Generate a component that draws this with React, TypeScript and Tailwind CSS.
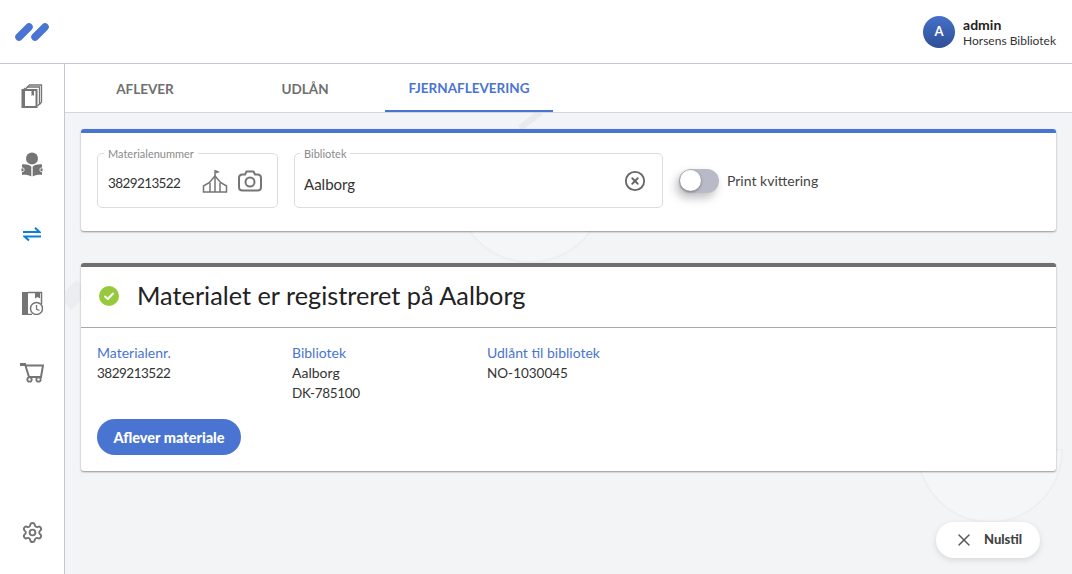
import { CircleX, Settings, X } from "lucide-react";

const BooksIcon = () => (
  <svg width="22" height="24" viewBox="0 0 22 24" fill="none">
    <path d="M6 3.500 8.500 1H20.500V18L18.500 20.500" stroke="#757575" strokeWidth="1.300" />
    <path d="M4 5.500 6.500 3H18.500V20L16.500 22" stroke="#757575" strokeWidth="1.300" />
    <path d="M1.500 6H15.500V23H1.500Z" fill="#fff" stroke="#757575" strokeWidth="2" />
    <path d="M1 6 4 3.500V23H1Z" fill="#757575" />
    <path d="M10.500 6H13V12L11.750 11 10.500 12Z" fill="#757575" />
  </svg>
);

const ReaderIcon = () => (
  <svg width="22" height="25" viewBox="0 0 22 25" fill="#757575">
    <circle cx="11" cy="6.500" r="6" />
    <path d="M10.300 14.500C8 12.500 4 12 1 12.500V23C4 22.500 8 23 10.300 24.500Z" />
    <path d="M11.700 14.500C14 12.500 18 12 21 12.500V23C18 22.500 14 23 11.700 24.500Z" />
    <rect x="0" y="16" width="3" height="3.500" rx="1" stroke="#fff" strokeWidth="0.800" />
    <rect x="19" y="16" width="3" height="3.500" rx="1" stroke="#fff" strokeWidth="0.800" />
  </svg>
);

const SwapIcon = () => (
  <svg width="18" height="14" viewBox="0 0 18 14" fill="none" stroke="#0f7fd6" strokeWidth="2">
    <path d="M0 5H16.500L12 0.800" />
    <path d="M18 9.500H1.500L6 13.500" />
  </svg>
);

const BookClockIcon = () => (
  <svg width="21" height="24" viewBox="0 0 21 24" fill="none">
    <path d="M0 1H6V24H0Z" fill="#757575" />
    <path d="M6 1.500H19.500V13M6 23.500H10" stroke="#757575" strokeWidth="1.500" />
    <path d="M13 1H18V7.500L15.500 6 13 7.500Z" fill="#757575" />
    <circle cx="14.500" cy="17.500" r="6" fill="#fff" stroke="#757575" strokeWidth="1.500" />
    <path d="M14.500 14V18L17.500 19.500" stroke="#757575" strokeWidth="1.300" />
  </svg>
);

const CartIcon = () => (
  <svg width="24" height="21" viewBox="0 0 24 21" fill="none" stroke="#757575">
    <path d="M0 1H6V4H0Z" fill="#757575" strokeWidth="0" />
    <path d="M5 2 9 15H21L23 3.500H5.500" strokeWidth="2" />
    <circle cx="9.500" cy="17.500" r="2.200" strokeWidth="1.800" />
    <circle cx="18.500" cy="17.500" r="2.200" strokeWidth="1.800" />
  </svg>
);

const LibraryIcon = () => (
  <svg width="26" height="24" viewBox="0 0 26 24" fill="none" stroke="#757575" strokeWidth="1.500">
    <path d="M1.500 23V17L7.500 13.500 13 7 18.500 13.500 24.500 17V23Z" />
    <path d="M8 14V23M18 14V23M13 8V23" />
    <path d="M13 7V1" />
    <path d="M13.500 1 18 3 13.500 4.500Z" fill="#757575" strokeWidth="0" />
  </svg>
);

const CameraIcon = () => (
  <svg width="24" height="22" viewBox="0 0 24 22" fill="none" stroke="#757575" strokeWidth="2">
    <path d="M4.500 4.500H7L8.500 1.500H15.500L17 4.500H19.500C21.500 4.500 23 6 23 8V17C23 19 21.500 20.500 19.500 20.500H4.500C2.500 20.500 1 19 1 17V8C1 6 2.500 4.500 4.500 4.500Z" strokeLinejoin="round" />
    <circle cx="12" cy="12" r="4.500" />
  </svg>
);

const Field = ({
  label,
  widthClass,
  labelClass,
  children,
}: {
  label: string;
  widthClass: string;
  labelClass: string;
  children: React.ReactNode;
}) => (
  <div className={`relative h-[55px] rounded-[5px] border border-[#dcdcdc] ${widthClass}`}>
    <span className={`absolute -top-[6px] bg-white px-1 text-[11px] leading-[12px] text-[#8a8a8a] ${labelClass}`}>
      {label}
    </span>
    {children}
  </div>
);

const InfoColumn = ({ title, lines }: { title: string; lines: { text: string; className: string }[] }) => (
  <div className="w-[195px] leading-5">
    <div className="text-[14px] text-[#4a74d1]">{title}</div>
    {lines.map((line) => (
      <div key={line.text} className={`text-[#333] ${line.className}`}>
        {line.text}
      </div>
    ))}
  </div>
);

const App = () => {
  return (
    <div
      className="flex h-[574px] w-[1072px] flex-col overflow-hidden bg-white text-[#333]"
      style={{ fontFamily: "Lato, 'Noto Sans', sans-serif" }}
    >
      <header className="flex h-[64px] shrink-0 items-center justify-between border-b border-[#c4c6d2] pl-[14px] pr-[16px]">
        <svg width="36" height="20" viewBox="0 0 36 20" fill="none" stroke="#4a74d1" strokeWidth="7.500" strokeLinecap="round">
          <path d="M5 15 15 5" />
          <path d="M21 15 31 5" />
        </svg>
        <div className="flex items-center gap-2">
          <div className="flex h-8 w-8 items-center justify-center rounded-full bg-gradient-to-b from-[#4471c9] to-[#2f4f96] text-[13px] font-bold text-white">
            A
          </div>
          <div className="pt-[2px] leading-[15px]">
            <div className="text-[14px] font-bold text-[#222]">admin</div>
            <div className="mt-[1px] text-[12px] text-[#333]">Horsens Bibliotek</div>
          </div>
        </div>
      </header>

      <div className="flex min-h-0 flex-1">
        <aside className="flex w-[65px] shrink-0 flex-col items-center border-r border-[#c4c6d2] pb-[30px] pt-[20px]">
          <div className="flex h-6 items-center">
            <BooksIcon />
          </div>
          <div className="mt-[44px] flex h-[25px] items-center">
            <ReaderIcon />
          </div>
          <div className="mt-[50px] flex h-[14px] items-center">
            <SwapIcon />
          </div>
          <div className="mt-[50px] flex h-6 items-center">
            <BookClockIcon />
          </div>
          <div className="mt-[47px] flex h-[21px] items-center">
            <CartIcon />
          </div>
          <Settings className="mt-auto h-[23px] w-[23px] text-[#757575]" strokeWidth={2} />
        </aside>

        <main className="relative min-w-0 flex-1 bg-[#f3f4f6]">
          <svg className="absolute inset-0 h-full w-full" viewBox="0 0 1007 510" fill="none" aria-hidden="true">
            <path d="M390 123A75 75 0 0 0 540 123Z" fill="#f5f6f7" stroke="#eeeff1" strokeWidth="2" />
            <path d="M853 386A72 72 0 0 0 997 386Z" fill="#f5f6f7" stroke="#eeeff1" strokeWidth="2" />
            <path d="M455 64 476 48" stroke="#e9eaed" strokeWidth="6" />
            <path d="M0 240 18 222" stroke="#ecedf0" strokeWidth="18" />
          </svg>

          <nav className="relative flex h-[49px] border-b border-[#d5d6db] bg-white pt-[2px] text-[13.500px] font-bold">
            <div className="flex w-[160px] items-center justify-center text-[#6f6f6f]">AFLEVER</div>
            <div className="flex w-[160px] items-center justify-center text-[#6f6f6f]">UDLÅN</div>
            <div className="flex w-[168px] items-center justify-center border-b-2 border-[#4a74d1] text-[#4a74d1]">
              FJERNAFLEVERING
            </div>
          </nav>

          <div className="relative flex flex-col gap-8 p-4 pb-0">
            <section className="flex h-[102px] items-center rounded-[3px] border-t-4 border-[#4a74d1] bg-white pb-[3px] pl-4 shadow-[0_1px_2px_rgba(0,0,0,0.4)]">
              <Field label="Materialenummer" widthClass="w-[181px]" labelClass="left-[6px]">
                <div className="flex h-full items-center pl-[10px] pr-[15px]">
                  <span className="mt-[6px] text-[13.500px] tracking-[-0.6px]">3829213522</span>
                  <span className="ml-auto flex items-center gap-[10px]">
                    <LibraryIcon />
                    <CameraIcon />
                  </span>
                </div>
              </Field>
              <div className="ml-4">
                <Field label="Bibliotek" widthClass="w-[369px]" labelClass="left-[5px]">
                  <div className="flex h-full items-center pl-[9px] pr-[16px]">
                    <span className="mt-[8px] text-[15px]">Aalborg</span>
                    <CircleX className="ml-auto h-[22px] w-[22px] text-[#666]" strokeWidth={2} />
                  </div>
                </Field>
              </div>
              <div className="ml-[16px] flex items-center gap-2">
                <div className="flex h-6 w-10 items-center rounded-full bg-[#b8bbc7] pl-[1px] shadow-[-3px_5px_10px_rgba(0,0,0,0.25)]">
                  <div className="h-[21px] w-[21px] rounded-full bg-white shadow-[0_1px_3px_rgba(0,0,0,0.4)]" />
                </div>
                <span className="text-[14px] text-[#444]">Print kvittering</span>
              </div>
            </section>

            <section className="h-[208px] rounded-[3px] border-t-4 border-[#6f6f6f] bg-white shadow-[0_1px_2px_rgba(0,0,0,0.4)]">
              <div className="flex h-[61px] items-center gap-[18px] border-b border-[#a9a9ad] pb-[3px] pl-[18px]">
                <svg width="20" height="20" viewBox="0 0 20 20" fill="none">
                  <circle cx="10" cy="10" r="10" fill="#97c93d" />
                  <path d="M6 10.500 8.800 13 14 7.500" stroke="#fff" strokeWidth="2" strokeLinecap="round" strokeLinejoin="round" />
                </svg>
                <h1 className="text-[25.300px] font-normal text-[#222]">Materialet er registreret på Aalborg</h1>
              </div>
              <div className="flex pl-4 pt-[15px]">
                <InfoColumn title="Materialenr." lines={[{ text: "3829213522", className: "text-[13.500px] tracking-[-0.5px]" }]} />
                <InfoColumn
                  title="Bibliotek"
                  lines={[
                    { text: "Aalborg", className: "text-[14px]" },
                    { text: "DK-785100", className: "text-[13.500px] tracking-[-0.35px]" },
                  ]}
                />
                <InfoColumn title="Udlånt til bibliotek" lines={[{ text: "NO-1030045", className: "text-[13.500px]" }]} />
              </div>
              <button
                type="button"
                className="ml-4 mt-[16px] h-9 w-[144px] rounded-full bg-[#4a74d1] pt-[1px] text-[14.500px] font-black text-white"
              >
                Aflever materiale
              </button>
            </section>
          </div>

          <button
            type="button"
            className="absolute bottom-[16px] right-[32px] flex h-9 w-[104px] items-center gap-[10px] rounded-full bg-white pl-[18px] text-[13px] font-black text-[#444] shadow-[0_2px_6px_rgba(0,0,0,0.12)]"
          >
            <X className="h-[20px] w-[20px] text-[#555]" strokeWidth={1.700} />
            Nulstil
          </button>
        </main>
      </div>
    </div>
  );
};

export default App;
